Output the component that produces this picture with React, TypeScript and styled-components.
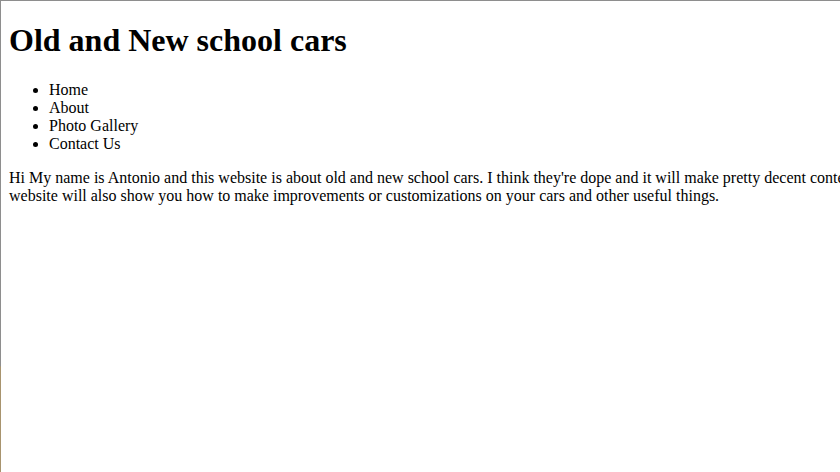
import React from "react";
import styled, { createGlobalStyle } from "styled-components";

const Global = createGlobalStyle`
  html, body {
    margin: 0;
    padding: 0;
    background: #ffffff;
    overflow: hidden;
  }
  body {
    font-family: "Liberation Serif", "Times New Roman", serif;
    color: #000;
  }
`;

const Frame = styled.div`
  box-sizing: border-box;
  width: 840px;
  height: 472px;
  overflow: hidden;
  border-top: 1px solid #8a8a8a;
  border-left: 1px solid #8a8a8a;
  border-image: linear-gradient(to bottom, #8e8e8e 0, #8e8e8e 365px, #a8946e 366px, #a8946e 100%) 1;
  padding: 0 8px;
`;

const Title = styled.h1`
  font-size: 32px;
  font-weight: bold;
  margin: 21.44px 0;
`;

const NavList = styled.ul`
  margin: 16px 0;
  padding-left: 40px;
  list-style: disc;
  font-size: 16px;
`;

const NavItem = styled.li`
  line-height: 18px;
`;

const Intro = styled.p`
  margin: 16px 0;
  font-size: 16px;
  line-height: 18px;
  white-space: nowrap;
`;

const links = ["Home", "About", "Photo Gallery", "Contact Us"];

export default function App() {
  return (
    <>
      <Global />
      <Frame>
        <Title>Old and New school cars</Title>
        <NavList>
          {links.map((l) => (
            <NavItem key={l}>{l}</NavItem>
          ))}
        </NavList>
        <Intro>
          Hi My name is Antonio and this website is about old and new school cars. I think they're dope and it will make pretty decent content. This
          <br />
          website will also show you how to make improvements or customizations on your cars and other useful things.
        </Intro>
      </Frame>
    </>
  );
}
